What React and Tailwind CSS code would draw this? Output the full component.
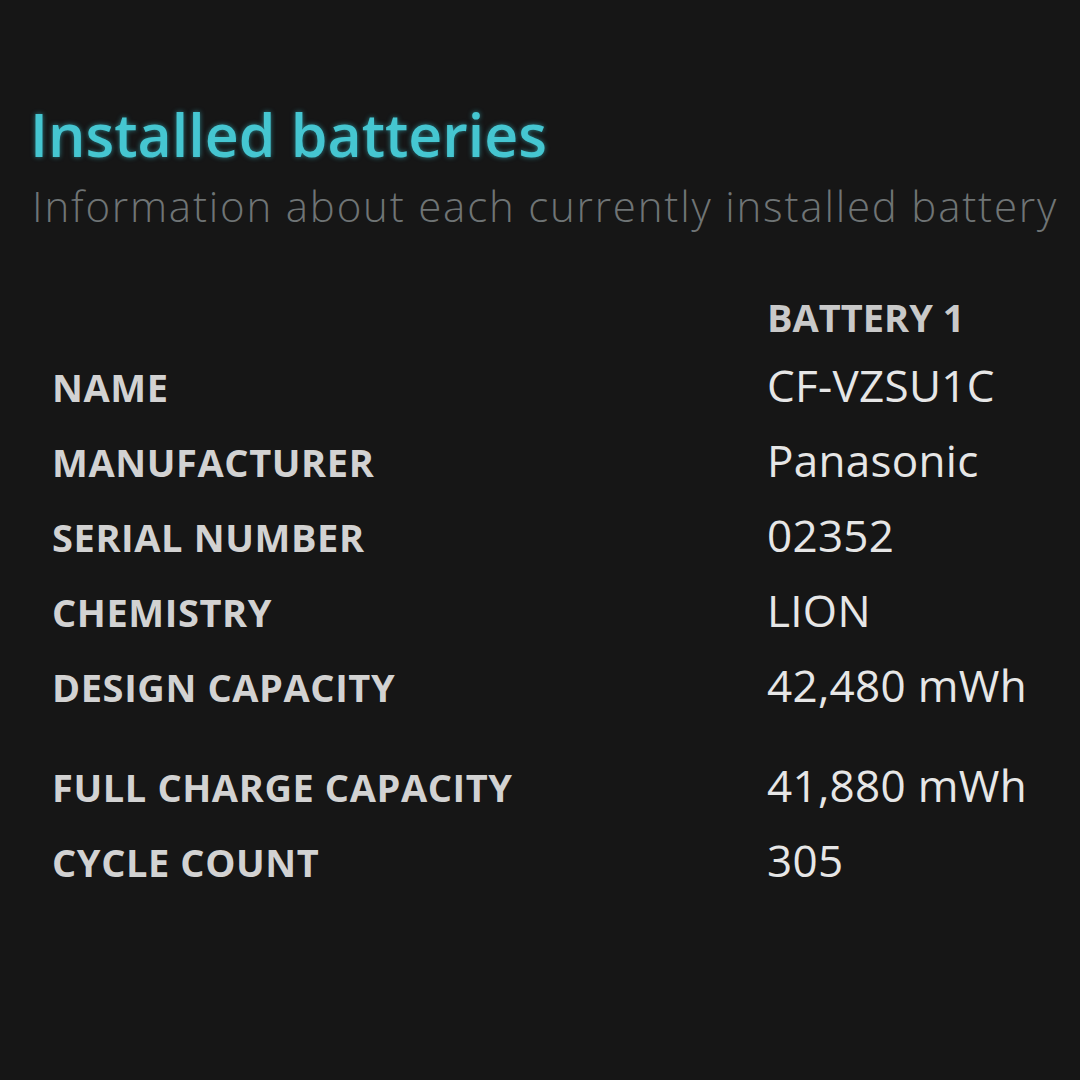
import React from 'react';

const rows = [
    { label: 'NAME', value: 'CF-VZSU1C' },
    { label: 'MANUFACTURER', value: 'Panasonic' },
    { label: 'SERIAL NUMBER', value: '02352' },
    { label: 'CHEMISTRY', value: 'LION' },
    { label: 'DESIGN CAPACITY', value: '42,480 mWh' },
    { label: 'FULL CHARGE CAPACITY', value: '41,880 mWh', gap: true },
    { label: 'CYCLE COUNT', value: '305' },
];

const App = () => {
    return (
        <div
            className="w-[1080px] h-[1080px] bg-[#161616] overflow-hidden"
            style={{ fontFamily: '"Open Sans", "Noto Sans", sans-serif' }}
        >
            <div className="pt-[96px] pl-[30px]">
                <h1 className="text-[59px] leading-[76px] font-semibold text-[#45c6d1] [text-shadow:0_0_5px_rgba(60,200,215,0.6)]">
                    Installed batteries
                </h1>
                <p className="mt-[6px] pl-[2px] text-[42px] leading-[56px] font-light tracking-[1.8px] text-[#6f7475] whitespace-nowrap">
                    Information about each currently installed battery
                </p>
            </div>

            {/* table */}
            <div className="mt-[53px] pl-[52px] flex flex-col">
                <div className="flex h-[61px] items-baseline leading-[61px]">
                    <div className="w-[715px]" />
                    <div className="text-[38px] font-bold text-[#c9c9c9]">BATTERY 1</div>
                </div>
                {rows.map((r) => (
                    <div
                        key={r.label}
                        className={`flex h-[75px] items-baseline leading-[75px] ${r.gap ? 'mt-[25px]' : ''}`}
                    >
                        <div className="w-[715px] text-[38px] font-bold tracking-[0.6px] text-[#d2d2d2]">
                            {r.label}
                        </div>
                        <div className="text-[44px] tracking-[0.3px] text-[#e6e6e6]">{r.value}</div>
                    </div>
                ))}
            </div>
        </div>
    );
};

export default App;
